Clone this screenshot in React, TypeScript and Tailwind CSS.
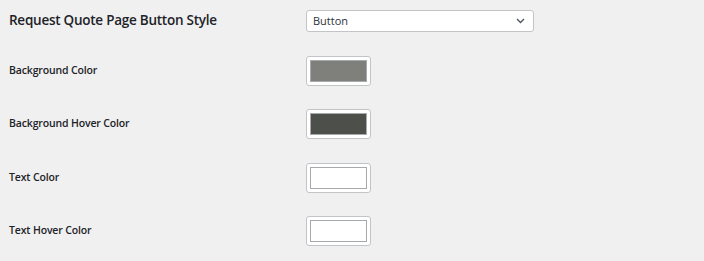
import React from 'react';

const colorRows = [
  { label: 'Background Color', color: '#7f807b' },
  { label: 'Background Hover Color', color: '#4d4f4b' },
  { label: 'Text Color', color: '#ffffff' },
  { label: 'Text Hover Color', color: '#ffffff' },
];

const Swatch: React.FC<{ color: string }> = ({ color }) => (
  <div className="w-[65px] h-[30px] bg-white border border-[#c3c4c7] rounded-[3px] p-[3px]">
    <div
      className="w-full h-full border border-[#a7aaad]"
      style={{ backgroundColor: color }}
    />
  </div>
);

const App: React.FC = () => {
  return (
    <div
      className="w-[704px] h-[261px] bg-[#f0f0f1] text-[#1d2327] px-[9px] pt-[10px]"
      style={{ fontFamily: '"Open Sans", "Noto Sans", sans-serif' }}
    >
      <div className="flex items-center">
        <h2 className="w-[297px] text-[13.5px] tracking-[-0.25px] font-semibold leading-none">
          Request Quote Page Button Style
        </h2>
        <div className="w-[228px] h-[22px] bg-white border border-[#c3c4c7] rounded-[3px] flex items-center justify-between pl-[6px] pr-[8px]">
          <span className="text-[11px] text-[#2c3338]">Button</span>
          <svg width="9" height="6" viewBox="0 0 9 6" fill="none">
            <path d="M1 1l3.5 3.5L8 1" stroke="#50575e" strokeWidth="1.4" />
          </svg>
        </div>
      </div>

      <div className="grid gap-y-[23.3px] mt-[24px]">
        {colorRows.map((row) => (
          <div key={row.label} className="flex items-center">
            <div className="w-[297px] text-[10.5px] tracking-[-0.15px] font-semibold">{row.label}</div>
            <Swatch color={row.color} />
          </div>
        ))}
      </div>
    </div>
  );
};

export default App;
